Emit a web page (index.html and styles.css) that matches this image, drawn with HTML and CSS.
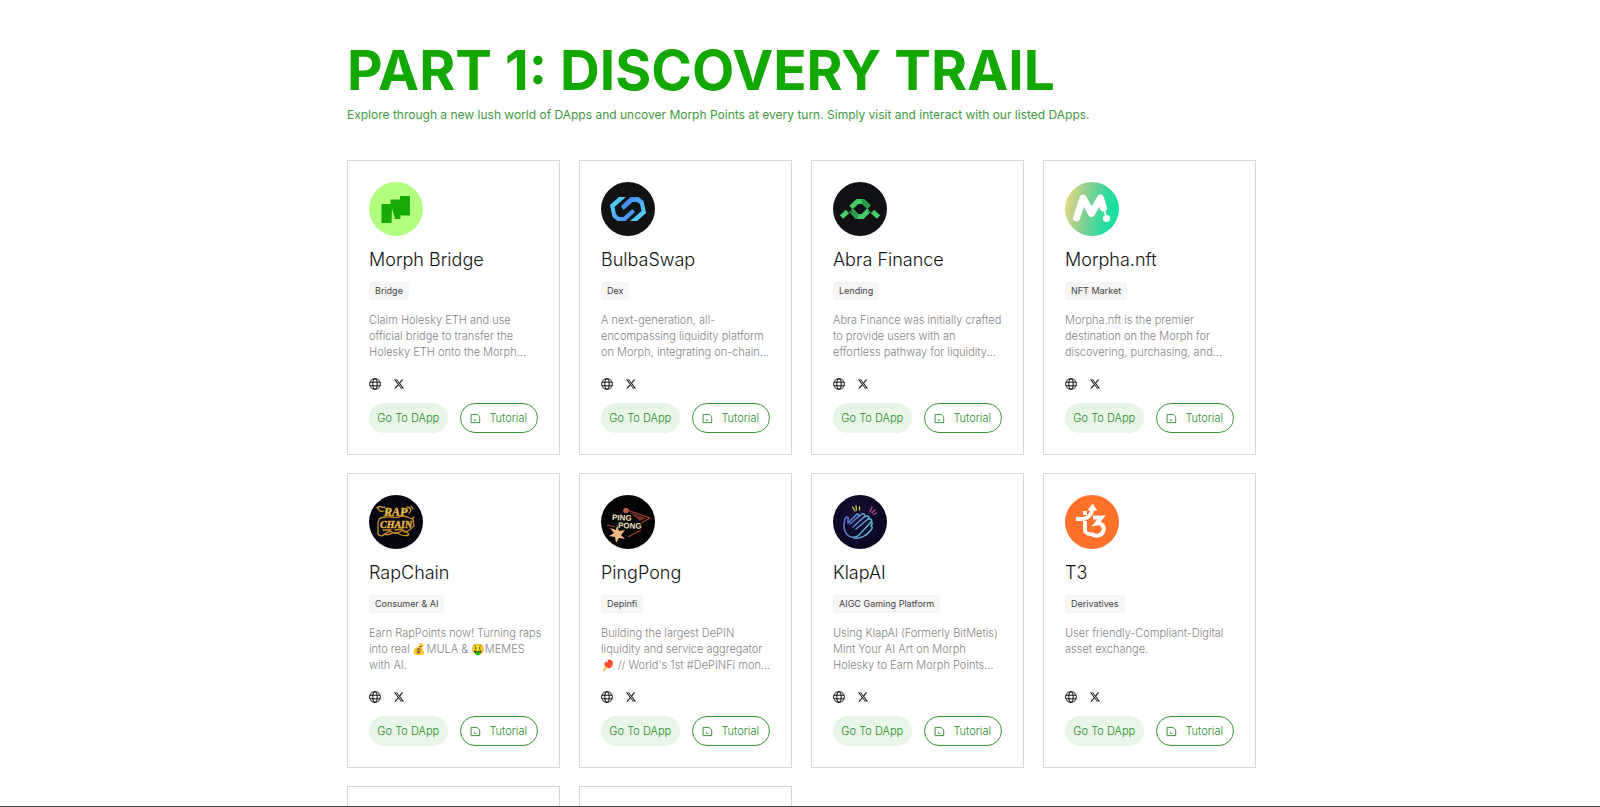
FILE: index.html
```html
<!DOCTYPE html>
<html lang="en">
<head>
  <meta charset="UTF-8">
  <meta name="viewport" content="width=device-width, initial-scale=1">
  <title>Discovery Trail</title>
  <link rel="stylesheet" href="styles.css">
</head>
<body>
  <!-- shared icons -->
  <svg class="sprite" aria-hidden="true">
    <symbol id="globe" viewBox="0 0 12 12">
      <g fill="none" stroke="currentColor">
        <circle cx="6" cy="6" r="5.4"/>
        <ellipse cx="6" cy="6" rx="2.2" ry="5.4"/>
        <path d="M1 4.200h10M1 7.800h10"/>
      </g>
    </symbol>
    <symbol id="x" viewBox="0 0 24 24">
      <path fill="currentColor" d="M18.9 1.2h3.7l-8 9.2L24 22.8h-7.4l-5.8-7.6-6.6 7.6H.5l8.6-9.8L0 1.2h7.6l5.2 6.9zm-1.3 19.5h2L6.5 3.2H4.3z"/>
    </symbol>
    <symbol id="doc" viewBox="0 0 12 12">
      <path fill="none" stroke="currentColor" d="M1.2 1.5h6.6l2.8 2.8v6.2H1.2zM4 7.8h3"/>
    </symbol>
  </svg>

  <main class="page">
    <div class="container">
      <h1 class="title">PART 1: DISCOVERY TRAIL</h1>
      <p class="subtitle">Explore through a new lush world of DApps and uncover Morph Points at every turn. Simply visit and interact with our listed DApps.</p>

      <div class="grid">
        <article class="card">
          <svg class="logo" viewBox="0 0 54 54">
            <circle cx="27" cy="27" r="27" fill="#b2ff80"/>
            <path fill="#17aa07" d="M12.500 22h9v-4.500h9.500v-3.500h10v19.500h-9.500v3.500h-5.500l-3-10.500-.5 14.500h-10z"/>
          </svg>
          <h2 class="name">Morph Bridge</h2>
          <span class="tag">Bridge</span>
          <p class="desc">Claim Holesky ETH and use official bridge to transfer the Holesky ETH onto the Morph...</p>
          <div class="links">
            <a href="#" aria-label="Website"><svg class="globe"><use href="#globe"/></svg></a>
            <a href="#" aria-label="X"><svg class="x"><use href="#x"/></svg></a>
          </div>
          <div class="actions">
            <button class="btn btn-go">Go To DApp</button>
            <button class="btn btn-tutorial"><svg class="doc"><use href="#doc"/></svg>Tutorial</button>
          </div>
        </article>

        <article class="card">
          <svg class="logo" viewBox="0 0 54 54">
            <defs>
              <linearGradient id="bulbaL" x1="0" y1="0" x2="1" y2="1">
                <stop offset="0" stop-color="#4fe3f5"/><stop offset=".6" stop-color="#4ea4f5"/><stop offset="1" stop-color="#3f85f0"/>
              </linearGradient>
              <linearGradient id="bulbaR" x1="1" y1="1" x2="0" y2="0">
                <stop offset="0" stop-color="#4fe3f5"/><stop offset=".6" stop-color="#4ea4f5"/><stop offset="1" stop-color="#3f6ff0"/>
              </linearGradient>
            </defs>
            <circle cx="27" cy="27" r="27" fill="#111214"/>
            <path fill="url(#bulbaL)" d="M25 15h-7l-9 8 2.500 12 5 4h8l9.500-9-2.500-3-9 8h-4.500l-3-3-1.500-7z"/>
            <path fill="url(#bulbaR)" d="M29 39h7l9-8-2.500-12-5-4h-8l-9.500 9 2.500 4 9-8h4.500l3 2 1.500 7z"/>
          </svg>
          <h2 class="name">BulbaSwap</h2>
          <span class="tag">Dex</span>
          <p class="desc">A next-generation, all-encompassing liquidity platform on Morph, integrating on-chain...</p>
          <div class="links">
            <a href="#" aria-label="Website"><svg class="globe"><use href="#globe"/></svg></a>
            <a href="#" aria-label="X"><svg class="x"><use href="#x"/></svg></a>
          </div>
          <div class="actions">
            <button class="btn btn-go">Go To DApp</button>
            <button class="btn btn-tutorial"><svg class="doc"><use href="#doc"/></svg>Tutorial</button>
          </div>
        </article>

        <article class="card">
          <svg class="logo" viewBox="0 0 54 54">
            <circle cx="27" cy="27" r="27" fill="#101114"/>
            <g fill="none" stroke="#45cc69" stroke-width="5">
              <path d="M18 25.500l6.500-6H30l6 5.500"/>
              <path d="M18 28l6 6.500h5.500l6.500-6.500"/>
              <path d="M8.500 35l6-5.500M45.500 35l-6-5.500"/>
            </g>
            <path fill="none" stroke="#2a9b4b" stroke-width="5" d="M29 19.500h1l6 5.500M25 34.500h-1l-6-6.500"/>
            <path stroke="#101114" d="M14 25l5 5M40 25l-5 5"/>
          </svg>
          <h2 class="name">Abra Finance</h2>
          <span class="tag">Lending</span>
          <p class="desc">Abra Finance was initially crafted to provide users with an<br>effortless pathway for liquidity...</p>
          <div class="links">
            <a href="#" aria-label="Website"><svg class="globe"><use href="#globe"/></svg></a>
            <a href="#" aria-label="X"><svg class="x"><use href="#x"/></svg></a>
          </div>
          <div class="actions">
            <button class="btn btn-go">Go To DApp</button>
            <button class="btn btn-tutorial"><svg class="doc"><use href="#doc"/></svg>Tutorial</button>
          </div>
        </article>

        <article class="card">
          <svg class="logo" viewBox="0 0 54 54">
            <defs>
              <linearGradient id="morpha" x1="0" y1=".4" x2="1" y2=".6">
                <stop offset="0" stop-color="#e6d884"/><stop offset=".4" stop-color="#7fcf92"/><stop offset=".75" stop-color="#2bdc9d"/><stop offset="1" stop-color="#0fe3a2"/>
              </linearGradient>
            </defs>
            <circle cx="27" cy="27" r="27" fill="url(#morpha)"/>
            <path fill="none" stroke="#fff" stroke-width="7" stroke-linecap="round" stroke-linejoin="round" d="M11.500 36L18 16l8.500 15.500L35.500 16l3 10"/>
            <path stroke="#fff" stroke-width="1.500" d="M39 27l2 8"/>
            <circle cx="41.500" cy="36.500" r="3.600" fill="#fff"/>
          </svg>
          <h2 class="name">Morpha.nft</h2>
          <span class="tag">NFT Market</span>
          <p class="desc">Morpha.nft is the premier destination on the Morph for discovering, purchasing, and...</p>
          <div class="links">
            <a href="#" aria-label="Website"><svg class="globe"><use href="#globe"/></svg></a>
            <a href="#" aria-label="X"><svg class="x"><use href="#x"/></svg></a>
          </div>
          <div class="actions">
            <button class="btn btn-go">Go To DApp</button>
            <button class="btn btn-tutorial"><svg class="doc"><use href="#doc"/></svg>Tutorial</button>
          </div>
        </article>

        <article class="card">
          <svg class="logo" viewBox="0 0 54 54">
            <defs>
              <linearGradient id="gold" x1="0" y1="0" x2="0" y2="1">
                <stop offset="0" stop-color="#d9a032"/><stop offset=".5" stop-color="#f7dc86"/><stop offset="1" stop-color="#c98a1c"/>
              </linearGradient>
            </defs>
            <circle cx="27" cy="27" r="27" fill="#05060f"/>
            <g fill="url(#gold)" stroke="#d9a032" stroke-width=".5" class="rap-text">
              <text x="15" y="21" font-size="12">RAP</text>
              <text x="11" y="33" font-size="10">CHAIN</text>
            </g>
            <g fill="none" stroke="#c9932a" stroke-width="1.300" stroke-linecap="round">
              <path d="M8 13c3-4 5 1 8-1M9 12c0 4 3 5 6 4M38 12c4 0 5 4 2 6M42 11l2 3"/>
              <path d="M10 24c3-3 6-1 9-2s7 2 11 0 9 0 13 2l2-2"/>
              <path d="M10 25c-3 5 0 8-1 12s4 5 7 2 5-3 9-1 7-4 11-2 6-3 9-5l-1-7"/>
              <path d="M15 39c6 3 8-3 13-1s6 4 10 2M35 37c4-1 6 3 3 4M14 35h8M26 35l8-1"/>
            </g>
          </svg>
          <h2 class="name">RapChain</h2>
          <span class="tag">Consumer &amp; AI</span>
          <p class="desc">Earn RapPoints now! Turning raps into real 💰MULA &amp; 🤑MEMES with AI.</p>
          <div class="links">
            <a href="#" aria-label="Website"><svg class="globe"><use href="#globe"/></svg></a>
            <a href="#" aria-label="X"><svg class="x"><use href="#x"/></svg></a>
          </div>
          <div class="actions">
            <button class="btn btn-go">Go To DApp</button>
            <button class="btn btn-tutorial"><svg class="doc"><use href="#doc"/></svg>Tutorial</button>
          </div>
        </article>

        <article class="card">
          <svg class="logo" viewBox="0 0 54 54">
            <circle cx="27" cy="27" r="27" fill="#040404"/>
            <path fill="none" stroke="#a8412f" stroke-width="1.200" d="M26 15l23 8-9 5M6 30l8 2M27 42l13-7"/>
            <circle cx="25" cy="15.500" r="2.800" fill="#b5604a"/>
            <path fill="#6f3128" d="M28 17l17 6-6 3z"/>
            <path fill="#efb888" d="M16 30l2 6 6-1-4 5 4 4-6-1-3 5-1-6-6-1 5-3-4-5 6 2z"/>
            <g class="ping-text" fill="#f3e0c8">
              <text x="11" y="25" font-size="8" transform="rotate(2 11 25)">PING</text>
              <text x="17" y="33" font-size="8" transform="rotate(2 17 33)">PONG</text>
            </g>
          </svg>
          <h2 class="name">PingPong</h2>
          <span class="tag">Depinfi</span>
          <p class="desc">Building the largest DePIN liquidity and service aggregator 🏓 // World's 1st #DePINFi mon...</p>
          <div class="links">
            <a href="#" aria-label="Website"><svg class="globe"><use href="#globe"/></svg></a>
            <a href="#" aria-label="X"><svg class="x"><use href="#x"/></svg></a>
          </div>
          <div class="actions">
            <button class="btn btn-go">Go To DApp</button>
            <button class="btn btn-tutorial"><svg class="doc"><use href="#doc"/></svg>Tutorial</button>
          </div>
        </article>

        <article class="card">
          <svg class="logo" viewBox="0 0 54 54">
            <defs>
              <radialGradient id="klapBg" cx=".45" cy=".4" r=".6">
                <stop offset="0" stop-color="#1a1035"/><stop offset="1" stop-color="#070520"/>
              </radialGradient>
              <linearGradient id="klap" x1="0" y1="0" x2="1" y2=".3">
                <stop offset="0" stop-color="#5c6fd8"/><stop offset="1" stop-color="#58c0cc"/>
              </linearGradient>
            </defs>
            <circle cx="27" cy="27" r="27" fill="url(#klapBg)"/>
            <g fill="none" stroke="url(#klap)" stroke-width="1.500" stroke-linecap="round" stroke-linejoin="round">
              <path d="M12 36c-2-5-1-8 0-12 1-3 4-2 3 1l0 3 8-8c2-2 4 0 2 2l4-3c2-1 4 1 2 3l3-1c2 0 3 2 1 3l2 0c2 0 2 2 1 3L26 40c-4 4-11 3-14-4z"/>
              <path d="M17 29l8-7M20 32l11-10M23 34l12-10M38 27c2 0 1 3 0 4l1 1c1 1-1 3-2 4-3 4-9 8-16 7"/>
            </g>
            <path stroke="#c9cf4a" stroke-width="1.300" stroke-linecap="round" d="M19.500 12l2.500 4M23 11l.5 4M26.500 12v3"/>
            <path stroke="#b9458f" stroke-width="1.300" stroke-linecap="round" d="M39 12l-2 5M42 15l-3 3M43.500 18l-3 1.500"/>
          </svg>
          <h2 class="name">KlapAI</h2>
          <span class="tag">AIGC Gaming Platform</span>
          <p class="desc">Using KlapAI (Formerly BitMetis) Mint Your AI Art on Morph Holesky to Earn Morph Points...</p>
          <div class="links">
            <a href="#" aria-label="Website"><svg class="globe"><use href="#globe"/></svg></a>
            <a href="#" aria-label="X"><svg class="x"><use href="#x"/></svg></a>
          </div>
          <div class="actions">
            <button class="btn btn-go">Go To DApp</button>
            <button class="btn btn-tutorial"><svg class="doc"><use href="#doc"/></svg>Tutorial</button>
          </div>
        </article>

        <article class="card">
          <svg class="logo" viewBox="0 0 54 54">
            <circle cx="27" cy="27" r="27" fill="#ff7029"/>
            <g fill="none" stroke="#fff" stroke-width="4">
              <path d="M11 23.500c8 2 15-1 16.500-9.500"/>
              <path d="M20 16v4M20 26v8c0 4 2 5 6 5"/>
              <path d="M28 22.500h8.500l-5 6c5-1 8 3 7 7-1 5-8 7-12.500 3"/>
            </g>
            <path fill="#fff" d="M27.500 8.500l5 7h-10z"/>
          </svg>
          <h2 class="name">T3</h2>
          <span class="tag">Derivatives</span>
          <p class="desc">User friendly-Compliant-Digital asset exchange.</p>
          <div class="links">
            <a href="#" aria-label="Website"><svg class="globe"><use href="#globe"/></svg></a>
            <a href="#" aria-label="X"><svg class="x"><use href="#x"/></svg></a>
          </div>
          <div class="actions">
            <button class="btn btn-go">Go To DApp</button>
            <button class="btn btn-tutorial"><svg class="doc"><use href="#doc"/></svg>Tutorial</button>
          </div>
        </article>

        <article class="card"></article>
        <article class="card"></article>
      </div>
    </div>
  </main>
</body>
</html>
```
FILE: styles.css
```css
* {
  box-sizing: border-box;
}

body {
  font-family: Inter, "Noto Color Emoji", sans-serif;
  font-weight: 300;
  background: #fff;
  margin: 0;
}

.sprite {
  display: none;
}

.page {
  height: 100vh;
  overflow: hidden;
  border-bottom: 1px solid #444;
}

.container {
  max-width: 912px;
  margin: 0 auto;
  padding: 40px 0 0 3px;
}

.title {
  margin: 0;
  font-size: 55px;
  line-height: 60px;
  font-weight: 700;
  color: #13a800;
}

.subtitle {
  margin: 5px 0 35px;
  font-size: 12px;
  line-height: 20px;
  font-weight: 400;
  color: #439943;
}

.grid {
  display: grid;
  grid-template-columns: repeat(4, 1fr);
  gap: 18px 19px;
}

.card {
  display: flex;
  flex-direction: column;
  align-items: flex-start;
  min-height: 295px;
  padding: 21px 21px 20px;
  border: 1px solid #d3dbd7;
}

.logo {
  width: 54px;
  height: 54px;
}

.rap-text {
  font-family: "Liberation Serif", serif;
  font-weight: 700;
  font-style: italic;
}

.ping-text {
  font-family: "Liberation Sans", sans-serif;
  font-weight: 700;
}

.name {
  margin: 12px 0 11px;
  font-size: 18px;
  line-height: 23px;
  font-weight: 300;
  color: #111;
}

.tag {
  padding: 0 6px;
  font-size: 9px;
  line-height: 18px;
  font-weight: 400;
  color: #444;
  background: #f5f5f5;
  border-radius: 2px;
}

.desc {
  height: 48px;
  margin: 12px -6px 18px 0;
  font-size: 11px;
  line-height: 16px;
  color: #858585;
  overflow: hidden;
}

.links {
  display: flex;
  align-items: center;
  gap: 13px;
  height: 12px;
  margin-bottom: 13px;
}

.links a {
  display: flex;
  color: #111;
}

.globe {
  width: 12px;
  height: 12px;
}

.x {
  width: 10px;
  height: 10px;
}

.actions {
  display: grid;
  grid-template-columns: 1fr 1fr;
  gap: 12px;
  width: 100%;
}

.btn {
  display: flex;
  align-items: center;
  justify-content: center;
  gap: 8px;
  height: 30px;
  padding: 0;
  border: 0;
  border-radius: 15px;
  font-family: inherit;
  font-size: 11px;
  font-weight: 300;
  color: #2b8a2b;
  white-space: nowrap;
  cursor: pointer;
}

.btn-go {
  background: #e7f6e6;
}

.btn-tutorial {
  background: #fff;
  border: 1px solid #369636;
}

.doc {
  width: 11px;
  height: 11px;
}

@media (max-width: 940px) {
  .page {
    height: auto;
    padding: 0 16px;
  }

  .grid {
    grid-template-columns: repeat(2, 1fr);
  }
}
```
